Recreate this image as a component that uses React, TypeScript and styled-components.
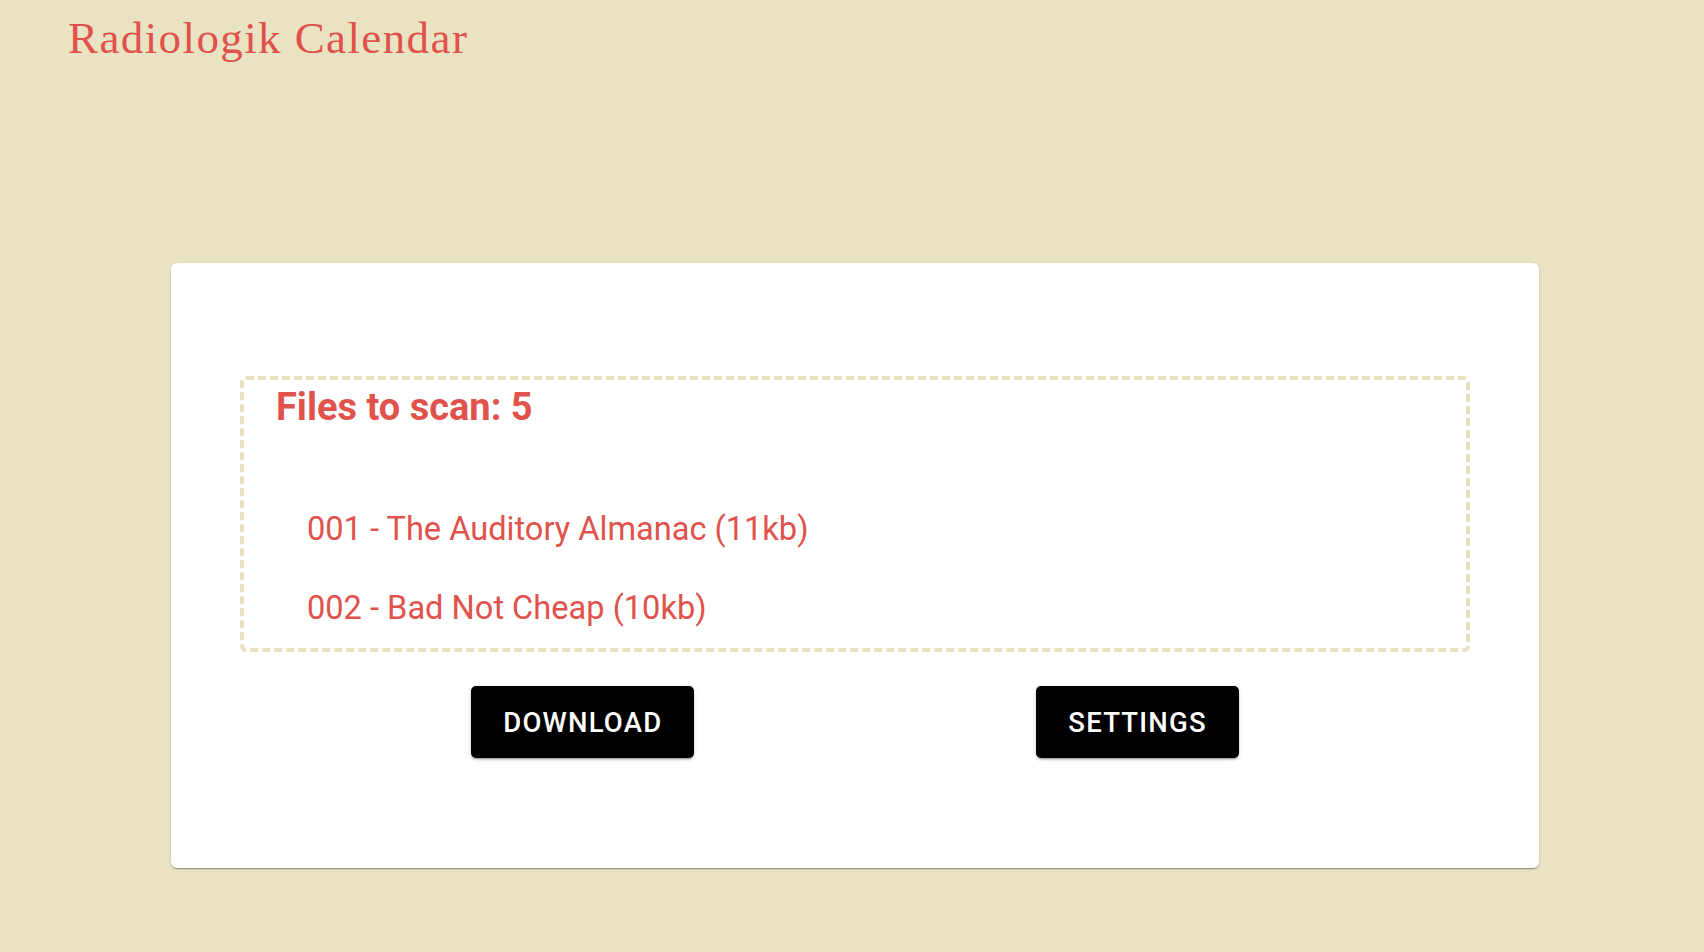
import React from "react";
import styled, { createGlobalStyle } from "styled-components";

const GlobalStyle = createGlobalStyle`
  html, body {
    margin: 0;
    padding: 0;
    background: #e9e3c3;
  }
  body {
    font-family: Roboto, "Liberation Sans", sans-serif;
    min-height: 952px;
  }
`;

const Page = styled.div`
  display: flex;
  flex-direction: column;
  min-height: 952px;
`;

const Title = styled.h1`
  margin: 0;
  padding: 12px 0 0 68px;
  font-family: "Liberation Serif", "Times New Roman", serif;
  font-weight: 400;
  font-size: 45px;
  line-height: 52px;
  letter-spacing: 1.4px;
  color: #e0524b;
`;

const Card = styled.section`
  margin: 199px 0 0 171px;
  width: 1368px;
  box-sizing: border-box;
  background: #ffffff;
  border-radius: 6px;
  box-shadow: 0 2px 1px -1px rgba(0, 0, 0, 0.2), 0 1px 1px 0 rgba(0, 0, 0, 0.14),
    0 1px 3px 0 rgba(0, 0, 0, 0.12);
  padding: 113px 69px 110px;
  display: flex;
  flex-direction: column;
`;

const DropZone = styled.div`
  border: 4px dashed #e8e1bf;
  border-radius: 6px;
  padding: 5px 32px 15px;
`;

const Heading = styled.h2`
  margin: 0;
  font-family: Roboto, sans-serif;
  font-weight: 700;
  font-size: 38px;
  line-height: 45px;
  color: #e0524b;
`;

const FileList = styled.ul`
  list-style: none;
  margin: 75px 0 0;
  padding: 0 0 0 31px;
  display: flex;
  flex-direction: column;
  gap: 30px;
`;

const FileItem = styled.li`
  font-family: Roboto, sans-serif;
  font-weight: 400;
  font-size: 32.6px;
  line-height: 49px;
  color: #e0524b;
`;

const Actions = styled.div`
  display: flex;
  justify-content: center;
  gap: 342px;
  margin-top: 34px;
`;

const Button = styled.button`
  height: 72px;
  padding: 0 32px;
  border: none;
  border-radius: 5px;
  background: #000000;
  color: #ffffff;
  font-family: Roboto, sans-serif;
  font-weight: 500;
  font-size: 27.5px;
  letter-spacing: 1.2px;
  text-transform: uppercase;
  cursor: pointer;
  box-shadow: 0 3px 1px -2px rgba(0, 0, 0, 0.2), 0 2px 2px 0 rgba(0, 0, 0, 0.14),
    0 1px 5px 0 rgba(0, 0, 0, 0.12);
`;

const files = [
  "001 - The Auditory Almanac (11kb)",
  "002 - Bad Not Cheap (10kb)",
];

export default function App() {
  return (
    <Page>
      <GlobalStyle />
      <Title>Radiologik Calendar</Title>
      <Card>
        <DropZone>
          <Heading>Files to scan: 5</Heading>
          <FileList>
            {files.map((f) => (
              <FileItem key={f}>{f}</FileItem>
            ))}
          </FileList>
        </DropZone>
        <Actions>
          <Button>Download</Button>
          <Button>Settings</Button>
        </Actions>
      </Card>
    </Page>
  );
}
